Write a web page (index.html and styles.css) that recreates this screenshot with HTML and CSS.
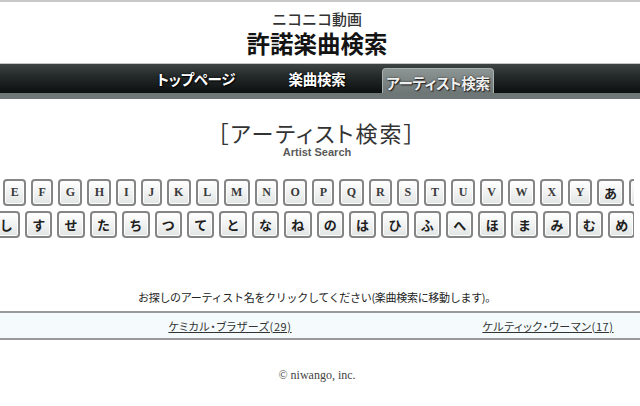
FILE: index.html
```html
<!DOCTYPE html>
<html lang="ja">
<head>
<meta charset="utf-8">
<title>許諾楽曲検索 - アーティスト検索</title>
<link rel="stylesheet" href="styles.css">
</head>
<body>
<div class="topline"></div>
<header class="masthead">
  <div class="brand-sub">ニコニコ動画</div>
  <div class="brand-main">許諾楽曲検索</div>
</header>
<nav class="nav">
  <div class="tabs">
    <a class="tab" href="#">トップページ</a>
    <a class="tab" href="#">楽曲検索</a>
    <a class="tab active" href="#">アーティスト検索</a>
  </div>
</nav>
<div class="strip"></div>
<main class="content">
  <h1 class="title">［アーティスト検索］</h1>
  <div class="subtitle">Artist Search</div>
  <div class="keys">
    <div class="row row1">
      <a class="key lat">A</a><a class="key lat">B</a><a class="key lat">C</a><a class="key lat">D</a>
      <a class="key lat">E</a><a class="key lat">F</a><a class="key lat">G</a><a class="key lat">H</a>
      <a class="key lat">I</a><a class="key lat">J</a><a class="key lat">K</a><a class="key lat">L</a>
      <a class="key lat">M</a><a class="key lat">N</a><a class="key lat">O</a><a class="key lat">P</a>
      <a class="key lat">Q</a><a class="key lat">R</a><a class="key lat">S</a><a class="key lat">T</a>
      <a class="key lat">U</a><a class="key lat">V</a><a class="key lat">W</a><a class="key lat">X</a>
      <a class="key lat">Y</a>
      <a class="key kana">あ</a><a class="key kana">い</a><a class="key kana">う</a><a class="key kana">え</a><a class="key kana">お</a>
    </div>
    <div class="row row2">
      <a class="key kana">か</a><a class="key kana">き</a><a class="key kana">く</a><a class="key kana">け</a><a class="key kana">こ</a><a class="key kana">さ</a>
      <a class="key kana">し</a><a class="key kana">す</a><a class="key kana">せ</a><a class="key kana">た</a><a class="key kana">ち</a>
      <a class="key kana">つ</a><a class="key kana">て</a><a class="key kana">と</a><a class="key kana">な</a><a class="key kana">ね</a>
      <a class="key kana">の</a><a class="key kana">は</a><a class="key kana">ひ</a><a class="key kana">ふ</a><a class="key kana">へ</a>
      <a class="key kana">ほ</a><a class="key kana">ま</a><a class="key kana">み</a><a class="key kana">む</a><a class="key kana">め</a>
      <a class="key kana">も</a><a class="key kana">や</a><a class="key kana">ゆ</a><a class="key kana">よ</a><a class="key kana">ら</a><a class="key kana">り</a>
    </div>
  </div>
  <p class="note">お探しのアーティスト名をクリックしてください(楽曲検索に移動します)。</p>
  <div class="list">
    <div class="list-row">
      <div class="cell"><a href="#">ケミカル・ブラザーズ(29)</a></div>
      <div class="cell"><a href="#">ケルティック・ウーマン(17)</a></div>
    </div>
  </div>
  <footer class="footer">© niwango, inc.</footer>
</main>
</body>
</html>
```
FILE: styles.css
```css
html, body {
  margin: 0;
  padding: 0;
  background: #fff;
  overflow: hidden;
}
body {
  font-family: "Noto Sans CJK JP", "Liberation Sans", sans-serif;
  color: #333;
  width: 640px;
}
a { color: inherit; text-decoration: none; }

.topline {
  height: 2px;
  background: #c9c9c9;
}

.masthead {
  height: 61px;
  padding-right: 6px;
  display: flex;
  flex-direction: column;
  align-items: center;
}
.brand-sub {
  margin-top: 7px;
  font-size: 15px;
  line-height: 20px;
  font-weight: 500;
  color: #333;
}
.brand-main {
  font-size: 23.5px;
  line-height: 28px;
  font-weight: bold;
  color: #141414;
}

.nav {
  height: 29px;
  border-top: 1px solid #c6c6c6;
  background: linear-gradient(#3e4444, #252a2a 40%, #0c0f0f);
  padding-right: 6px;
}
.tabs {
  height: 29px;
  display: flex;
  justify-content: center;
  align-items: flex-end;
  gap: 9px;
}
.tab {
  width: 112px;
  height: 25px;
  box-sizing: border-box;
  display: flex;
  justify-content: center;
  align-items: center;
  padding-bottom: 5px;
  font-size: 14.5px;
  font-weight: bold;
  font-feature-settings: "palt";
  letter-spacing: -0.3px;
  color: #fff;
  text-shadow: 0 0 2px #000, 1px 1px 1px #000;
}
.tab.active {
  padding-bottom: 0;
  padding-top: 3px;
  background: linear-gradient(#8d9594, #6f7776);
  border: 1px solid #a9b1b0;
  border-bottom: none;
  border-radius: 4px 4px 0 0;
  color: #f0f0f0;
  text-shadow: 0 0 2px #222, 1px 1px 1px #222;
}
.strip {
  height: 6px;
  background: #6f7776;
}

.content {
  padding-right: 6px;
}
.title {
  margin: 19px 0 0;
  height: 28px;
  font-size: 22px;
  line-height: 28px;
  font-weight: normal;
  text-align: center;
  font-feature-settings: "palt";
  letter-spacing: 2px;
  color: #333;
}
.subtitle {
  height: 12px;
  font-family: "Liberation Sans", Arial, sans-serif;
  font-size: 11px;
  line-height: 12px;
  font-weight: bold;
  text-align: center;
  color: #5a5a5a;
}

.keys {
  margin-top: 21px;
  overflow: hidden;
  display: flex;
  flex-direction: column;
  gap: 5px;
}
.row {
  display: flex;
  justify-content: center;
  gap: 5px;
}
.row1 { padding-left: 10px; }
.row2 { padding-right: 6px; }
.key {
  flex: none;
  height: 27px;
  box-sizing: border-box;
  border: 2px solid #858585;
  border-radius: 4px;
  background: linear-gradient(#ffffff, #f1f2f2 50%, #e2e5e5);
  box-shadow: inset 0 0 0 1px #fdfdfd;
  display: flex;
  align-items: center;
  justify-content: center;
  color: #333;
}
.key.lat {
  padding: 0 5.4px;
  font-family: "Liberation Serif", serif;
  font-size: 12px;
  font-weight: bold;
  color: #3a3a3a;
}
.key.kana {
  padding: 0 5.2px;
  font-size: 13px;
  font-weight: bold;
  color: #1e1e1e;
}

.note {
  margin: 51px 0 0;
  height: 16px;
  font-size: 11px;
  line-height: 16px;
  text-align: center;
  color: #222;
  letter-spacing: -0.3px;
}

.list {
  margin: 6px -6px 0 0;
  border-top: 2px solid #999;
  border-bottom: 2px solid #999;
  background: #f5fbfc;
  overflow: hidden;
}
.list-row {
  height: 25px;
  padding-left: 71px;
  display: flex;
}
.cell {
  flex: none;
  width: 318px;
  display: flex;
  align-items: center;
  justify-content: center;
  font-size: 11px;
  font-feature-settings: "palt";
  letter-spacing: 0.6px;
  color: #333;
}
.cell a {
  text-decoration: underline;
}

.footer {
  margin-top: 27px;
  height: 16px;
  font-family: "Liberation Serif", serif;
  font-size: 12px;
  line-height: 16px;
  text-align: center;
  color: #444;
}
```
